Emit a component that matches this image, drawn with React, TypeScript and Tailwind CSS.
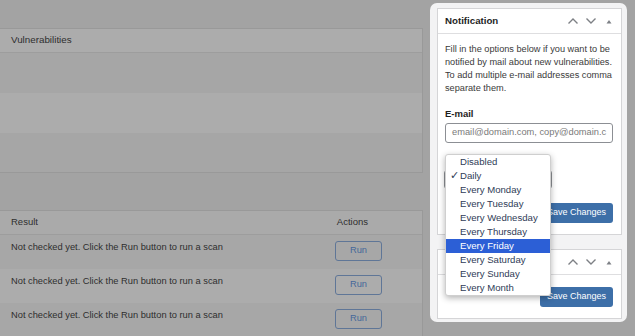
import React from "react";

const font = { fontFamily: '"Liberation Sans", Arial, sans-serif' };

function Chevrons() {
  return (
    <div className="flex items-center">
      <svg width="12" height="8" viewBox="0 0 12 8" className="mr-[6px]">
        <path d="M1.5 6.5 L6 2 L10.5 6.5" fill="none" stroke="#7d8085" strokeWidth="1.4" />
      </svg>
      <svg width="12" height="8" viewBox="0 0 12 8" className="mr-[9px]">
        <path d="M1.5 1.5 L6 6 L10.5 1.5" fill="none" stroke="#7d8085" strokeWidth="1.4" />
      </svg>
      <svg width="6" height="5" viewBox="0 0 6 5">
        <path d="M0.5 4.5 L3 1 L5.5 4.5 Z" fill="#7d8085" />
      </svg>
    </div>
  );
}

const options = [
  "Disabled",
  "Daily",
  "Every Monday",
  "Every Tuesday",
  "Every Wednesday",
  "Every Thursday",
  "Every Friday",
  "Every Saturday",
  "Every Sunday",
  "Every Month",
];

export default function App() {
  return (
    <div
      className="w-[635px] h-[336px] bg-[#a3a3a3] overflow-hidden flex text-[#2e2e2e]"
      style={font}
    >
      {/* Left content */}
      <div className="w-[423px] flex flex-col pt-[28px]">
        <div className="border-t border-b border-r border-[#999999] bg-[#a7a7a7]">
          <div className="h-[24px] flex items-center pl-[11px] bg-[#acacac] border-b border-[#9d9d9d] text-[9.8px]">
            Vulnerabilities
          </div>
          <div className="h-[40px] bg-[#a6a6a6]" />
          <div className="h-[40px] bg-[#acacac]" />
          <div className="h-[39px] bg-[#a6a6a6]" />
        </div>
        <div className="mt-[37px] border-t border-r border-[#999999] bg-[#a7a7a7] flex-1">
          <div className="h-[24px] flex items-center pl-[11px] pr-[54px] justify-between bg-[#aaaaaa] border-b border-[#9d9d9d] text-[9.5px]">
            <span>Result</span>
            <span>Actions</span>
          </div>
          {[0, 1, 2].map((i) => (
            <div
              key={i}
              className={`h-[34px] flex items-start justify-between pl-[11px] pr-[40px] pt-[6px] text-[9.3px] ${
                i === 1 ? "bg-[#acacac]" : "bg-[#a7a7a7]"
              }`}
            >
              <span className="leading-[12px]">Not checked yet. Click the Run button to run a scan</span>
              <div className="w-[47px] h-[20px] border border-[#5f7697] rounded-[3px] flex items-center justify-center text-[9.3px] text-[#45679a]">
                Run
              </div>
            </div>
          ))}
        </div>
      </div>

      {/* Right panel */}
      <div className="ml-[7px] mt-[3px] w-[197px] h-[319px] bg-[#f3f3f4] rounded-[7px] pl-[7px] pr-[5px] pt-[5px] relative">
        <div className="bg-white border border-[#d5d5d7]">
          <div className="h-[25px] border-b border-[#dedee0] flex items-center justify-between pl-[7px] pr-[9px]">
            <span className="font-bold text-[9.7px] text-[#1e1e1e]">Notification</span>
            <Chevrons />
          </div>
          <div className="pl-[7px] pr-[8px] pt-[9px] pb-[11px]">
            <p className="text-[9.2px] leading-[13px] text-[#3a3a3a] -mr-[6px]">
              Fill in the options below if you want to be notified by mail about new vulnerabilities. To add multiple e-mail addresses comma separate them.
            </p>
            <div className="mt-[12px] font-bold text-[9.5px] leading-[13px] text-[#1e1e1e]">E-mail</div>
            <div className="mt-[3px] h-[20px] border border-[#8c8f94] rounded-[3px] flex items-center pl-[6px] overflow-hidden whitespace-nowrap text-[9.3px] text-[#7a7a7a]">
              email@domain.com, copy@domain.c
            </div>
            <div className="mt-[27px] w-[108px] h-[19px] border border-[#8c8f94] rounded-[3px] -ml-[1px]" />
            <div className="mt-[14px] flex justify-end">
              <div className="h-[20px] w-[73px] bg-[#3d6fa8] rounded-[3px] text-white text-[9px] flex items-center justify-center">
                Save Changes
              </div>
            </div>
          </div>
        </div>
        <div className="mt-[14px] bg-white border border-[#d5d5d7]">
          <div className="h-[25px] border-b border-[#dedee0] flex items-center justify-end pr-[9px]">
            <Chevrons />
          </div>
          <div className="h-[43px] flex items-start justify-end pr-[8px] pt-[12px]">
            <div className="h-[20px] w-[73px] bg-[#3d6fa8] rounded-[3px] text-white text-[9px] flex items-center justify-center">
              Save Changes
            </div>
          </div>
        </div>

        {/* Dropdown menu */}
        <div className="absolute left-[15px] top-[151px] w-[106px] bg-white rounded-[3px] shadow-[0_2px_6px_rgba(0,0,0,0.3)] border border-[#cfcfcf] overflow-hidden">
          {options.map((o) => {
            const sel = o === "Every Friday";
            return (
              <div
                key={o}
                className={`h-[14px] flex items-center text-[9.6px] relative pl-[14px] ${
                  sel ? "bg-[#2c5fd6] text-white" : "text-[#2f3c57]"
                }`}
              >
                {o === "Daily" && (
                  <span className="absolute left-[4px] text-[10.5px]">✓</span>
                )}
                {o}
              </div>
            );
          })}
        </div>
      </div>
    </div>
  );
}
